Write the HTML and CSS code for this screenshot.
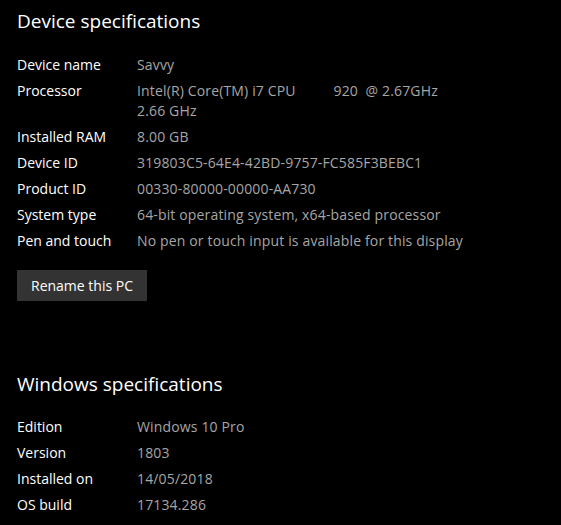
FILE: index.html
```html
<!DOCTYPE html>
<html lang="en">
<head>
    <meta charset="UTF-8">
    <meta name="viewport" content="width=device-width, initial-scale=1.0">
    <title>About</title>
    <link rel="stylesheet" href="styles.css">
</head>
<body>

    <div class="container">
        <h1>Device specifications</h1>

        <div class="specs">
            <span class="label">Device name</span>
            <span class="value">Savvy</span>

            <span class="label">Processor</span>
            <span class="value cpu">Intel(R) Core(TM) i7 CPU          920  @ 2.67GHz<br>2.66 GHz</span>

            <span class="label">Installed RAM</span>
            <span class="value">8.00 GB</span>

            <span class="label">Device ID</span>
            <span class="value">319803C5-64E4-42BD-9757-FC585F3BEBC1</span>

            <span class="label">Product ID</span>
            <span class="value">00330-80000-00000-AA730</span>

            <span class="label">System type</span>
            <span class="value">64-bit operating system, x64-based processor</span>

            <span class="label">Pen and touch</span>
            <span class="value">No pen or touch input is available for this display</span>
        </div>

        <button class="btn-rename">Rename this PC</button>

        <h1 class="second">Windows specifications</h1>

        <div class="specs">
            <span class="label">Edition</span>
            <span class="value">Windows 10 Pro</span>

            <span class="label">Version</span>
            <span class="value">1803</span>

            <span class="label">Installed on</span>
            <span class="value">14/05/2018</span>

            <span class="label">OS build</span>
            <span class="value">17134.286</span>
        </div>
    </div>

</body>
</html>
```

FILE: styles.css
```css
* {
    margin: 0;
    padding: 0;
    box-sizing: border-box;
}

body {
    font-family: 'Open Sans', 'Noto Sans', sans-serif;
    background: #000;
    color: #fff;
    overflow: hidden;
}

.container {
    padding: 7px 0 0 17px;
}

h1 {
    font-size: 19px;
    font-weight: 400;
    line-height: 28px;
    margin-bottom: 20px;
}

h1.second {
    margin-top: 69px;
    margin-bottom: 19px;
}

.specs {
    display: grid;
    grid-template-columns: 120px auto;
    row-gap: 6px;
    font-size: 14px;
    line-height: 20px;
}

.label {
    color: #fff;
}

.value {
    color: #a6a6a6;
    letter-spacing: 0.15px;
}

.cpu {
    white-space: pre;
}

.btn-rename {
    margin-top: 19px;
    height: 31px;
    padding: 0 14px;
    font-family: inherit;
    font-size: 14px;
    color: #fff;
    background: #333;
    border: none;
    cursor: pointer;
}
```
